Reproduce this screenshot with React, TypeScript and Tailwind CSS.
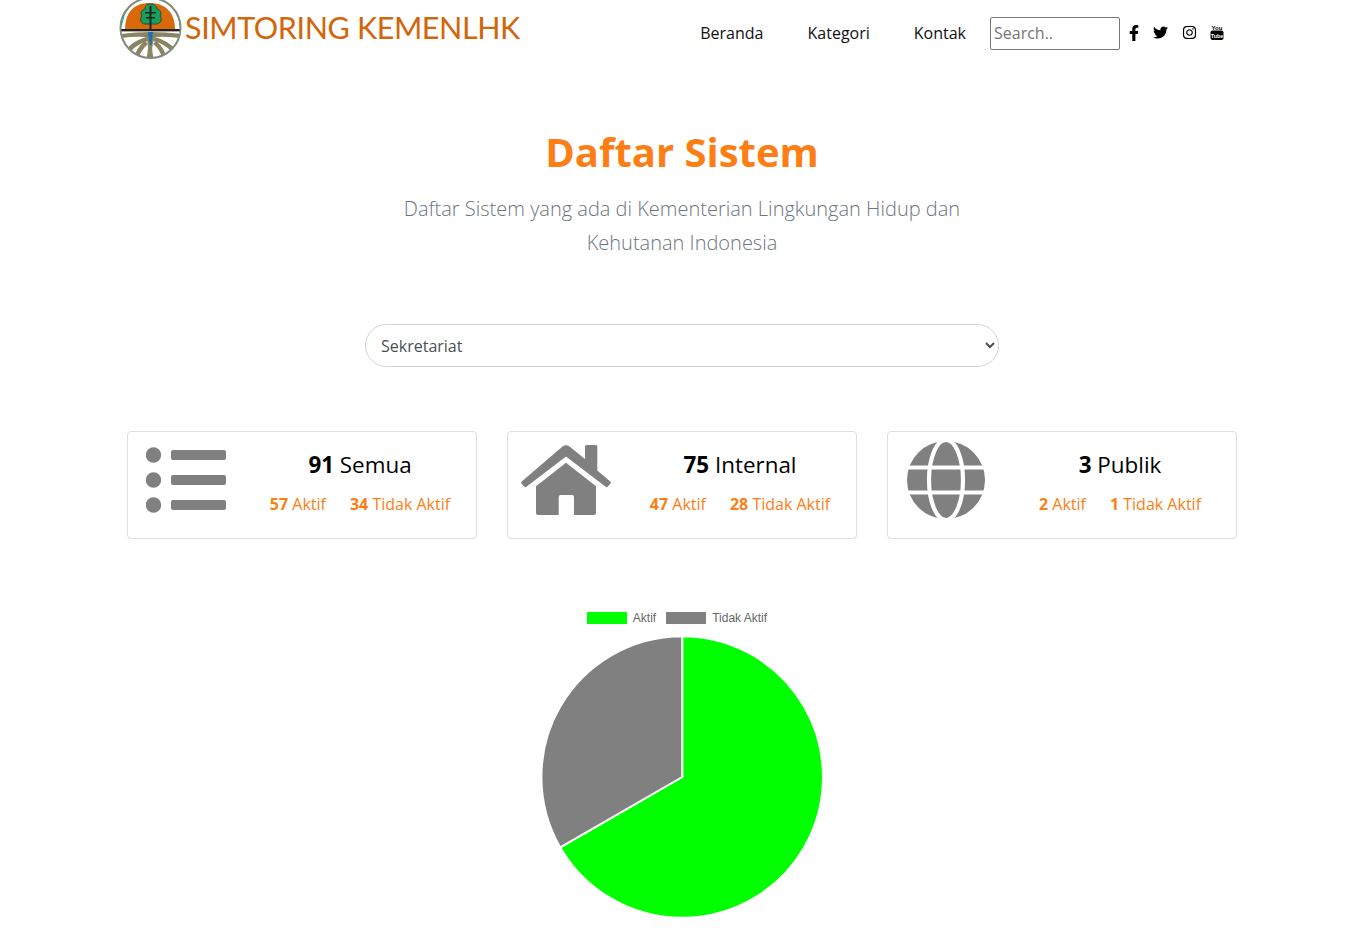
import React from "react";
import { FaFacebookF, FaTwitter, FaInstagram } from "react-icons/fa";

function Logo() {
  return (
    <svg width="64" height="60" viewBox="0 0 64 60" className="shrink-0">
      <defs>
        <clipPath id="lc"><circle cx="31.5" cy="28" r="29.5" /></clipPath>
      </defs>
      <circle cx="31.5" cy="28" r="30" fill="#fff" stroke="#8f8a70" strokeWidth="2" />
      <g clipPath="url(#lc)">
        <path d="M2 26 L5 15 M5 14 L10 7 M57 7 L62 26" stroke="#2aa37f" strokeWidth="1.4" fill="none" />
        <path d="M6 30 C6 11 16 3 30.5 3 C45 3 56 11 56 30Z" fill="#d9690b" />
        <rect x="0" y="29" width="64" height="2.6" fill="#23231f" />
        <rect x="0" y="31.6" width="64" height="3" fill="#fff" />
        <path d="M2 34 Q32 30 62 34 L62 38 Q44 36 36 37 Q31 46 35 60 L27 60 Q31 46 27 37 Q16 36 2 38Z" fill="#8a8460" />
        <path d="M27 37 Q12 42 7 50 L11 52 Q18 44 29 41Z M36 37 Q50 41 57 50 L53 52 Q46 44 34 41Z M26 41 Q17 48 15 58 L19 59 Q22 50 29 44Z M37 41 Q46 48 47 58 L43 59 Q42 50 34 44Z" fill="#8a8460" />
        <path d="M29 32 L34 32 L32.5 45 L31 45Z" fill="#1b6fb5" />
        <path d="M31.5 4 C27 4 26 7 26 9 C22 10 21 14 23 16 C20 19 22 25 28 24 L35 24 C41 25 44 20 41 16 C43 14 42 10 38 9 C38 7 36 4 31.5 4Z" fill="#14a05f" stroke="#0f4030" strokeWidth="0.8" />
        <path d="M30.5 6 H32.5 V31 H30.5Z M26 12 H37 V13.4 H26Z M27 17 H36 V18.4 H27Z" fill="#23231f" />
      </g>
      <circle cx="31.5" cy="28" r="29.8" fill="none" stroke="#5f8f9f" strokeWidth="0.6" />
    </svg>
  );
}

function YouTubeOld() {
  return (
    <svg width="14" height="16" viewBox="0 0 14 16" className="block">
      <text x="7" y="5.6" textAnchor="middle" fontSize="6" fontWeight="700" fontFamily="'Liberation Sans', sans-serif" fill="#000">You</text>
      <rect x="0.5" y="6.5" width="13" height="9.5" rx="2" fill="#000" />
      <text x="7" y="13.5" textAnchor="middle" fontSize="5.4" fontWeight="700" fontFamily="'Liberation Sans', sans-serif" fill="#fff">Tube</text>
    </svg>
  );
}

function ListIcon() {
  return (
    <svg width="80" height="70" viewBox="0 0 80 70" fill="#808080" className="block">
      <circle cx="7.5" cy="10" r="7.7" />
      <circle cx="7.5" cy="35" r="7.7" />
      <circle cx="7.5" cy="60" r="7.7" />
      <rect x="25" y="5" width="55" height="10" rx="2" />
      <rect x="25" y="30" width="55" height="10" rx="2" />
      <rect x="25" y="55" width="55" height="10" rx="2" />
    </svg>
  );
}

function HomeIcon() {
  return (
    <svg width="90" height="70" viewBox="0 0 90 70" fill="#808080" className="block">
      <path d="M41.5 1.5 Q45 -1 48.5 1.5 L64 14 V1.5 Q64 0 65.5 0 H75 Q76.3 0 76.3 1.5 V25.5 L89.3 36.5 Q90.3 37.5 89.5 38.5 L86.8 41.6 Q85.8 42.6 84.6 41.7 L45 11.5 L5.4 41.7 Q4.2 42.6 3.2 41.6 L0.5 38.5 Q-0.3 37.5 0.7 36.5 Z" />
      <path d="M45 17.7 L75 41.2 V68 Q75 70 73 70 H53 V52 Q53 50 51 50 H39.7 Q37.7 50 37.7 52 V70 H17 Q15 70 15 68 V41.2 Z" />
    </svg>
  );
}

function GlobeIcon() {
  return (
    <svg width="78" height="78" viewBox="0 0 78 78" className="block">
      <circle cx="39" cy="39" r="39" fill="#808080" />
      <ellipse cx="39" cy="39" rx="17" ry="40" fill="none" stroke="#fff" strokeWidth="4.2" />
      <path d="M0 26.5 H78 M0 51.5 H78" stroke="#fff" strokeWidth="4.2" />
    </svg>
  );
}

function Card({ icon, num, label, a, b, iconPt }: { icon: React.ReactNode; num: string; label: string; a: string; b: string; iconPt: string }) {
  return (
    <div className="w-[350px] h-[108px] border border-[#dfdfdf] rounded-[4px] bg-white grid grid-cols-[116px_232px]">
      <div className={"flex justify-center " + iconPt}>{icon}</div>
      <div className="flex flex-col items-center pt-[16px]">
        <div className="text-[22.4px] leading-[33px] text-black">
          <b className="font-bold">{num}</b> {label}
        </div>
        <div className="flex gap-6 mt-[11px] text-[16px] leading-[24px] text-[#fd7e14]">
          <span><b className="font-bold">{a}</b> Aktif</span>
          <span><b className="font-bold">{b}</b> Tidak Aktif</span>
        </div>
      </div>
    </div>
  );
}

export default function App() {
  return (
    <div className="bg-white text-black font-['Open_Sans',sans-serif] w-[1364px] h-[943px] overflow-hidden">
      <header className="w-[1140px] mx-auto h-[65px] flex items-start">
        <div className="ml-[7px] flex items-start">
          <Logo />
          <span className="ml-[2px] mt-[5px] text-[#d2660a] text-[30.5px] leading-[44px] font-['Lato',sans-serif] tracking-[-0.4px] whitespace-nowrap">
            SIMTORING KEMENLHK
          </span>
        </div>
        <nav className="ml-auto mr-[28px] flex items-center h-[33px] mt-[17px] text-[16px] text-[#111]">
          <a className="px-[22px] pb-[2px]">Beranda</a>
          <a className="px-[22px] pb-[2px]">Kategori</a>
          <a className="px-[22px] pb-[2px]">Kontak</a>
          <input
            placeholder="Search.."
            className="ml-[2px] w-[130px] h-[33px] px-[3px] pb-[2px] border border-[#767676] rounded-[2px] text-[16px] placeholder:text-[#757575] outline-none"
          />
          <div className="flex items-center text-black ml-[6px] w-[98px]">
            <FaFacebookF className="w-[14px] h-[16px] -mt-[2px] ml-[1px]" />
            <FaTwitter className="w-[15px] h-[15px] -mt-[2px] ml-[12px]" />
            <FaInstagram className="w-[15px] h-[15px] -mt-[2px] ml-[14px]" />
            <span className="ml-[13px] -mt-[3px]"><YouTubeOld /></span>
          </div>
        </nav>
      </header>

      <section className="flex flex-col items-center">
        <h2 className="mt-[57px] text-[40px] leading-[60px] font-bold text-[#fd7e14]">Daftar Sistem</h2>
        <p className="mt-[10px] w-[600px] text-center text-[20px] leading-[34px] font-light text-[#6c757d]">
          Daftar Sistem yang ada di Kementerian Lingkungan Hidup dan Kehutanan Indonesia
        </p>
        <select className="mt-[64px] w-[634px] h-[43px] pl-[11px] pr-[9px] border border-[#ced4da] rounded-full bg-white text-[16px] text-[#495057] outline-none">
          <option>Sekretariat</option>
        </select>
      </section>

      <section className="w-[1110px] mx-auto mt-[64px] flex gap-[30px]">
        <Card icon={<ListIcon />} iconPt="pt-[13px]" num="91" label="Semua" a="57" b="34" />
        <Card icon={<HomeIcon />} iconPt="pt-[13px]" num="75" label="Internal" a="47" b="28" />
        <Card icon={<GlobeIcon />} iconPt="pt-[9px]" num="3" label="Publik" a="2" b="1" />
      </section>

      <section className="mt-[72px] flex flex-col items-center">
        <div className="h-[14px] mr-[10px] flex items-center gap-[10px] text-[12px] leading-[14px] text-[#666] font-['Liberation_Sans',sans-serif]">
          <span className="flex items-center gap-[6px]"><i className="block w-[40px] h-[12px] bg-[#00ff00]" />Aktif</span>
          <span className="flex items-center gap-[6px]"><i className="block w-[40px] h-[12px] bg-[#808080]" />Tidak Aktif</span>
        </div>
        <svg width="284" height="284" viewBox="-142.2 -142 284 284" className="mt-[10px] block">
          <path d="M0 0 L0 -140.8 A140.8 140.8 0 1 1 -121.94 70.4 Z" fill="#00ff00" stroke="#fff" strokeWidth="2" />
          <path d="M0 0 L-121.94 70.4 A140.8 140.8 0 0 1 0 -140.8 Z" fill="#808080" stroke="#fff" strokeWidth="2" />
        </svg>
      </section>
    </div>
  );
}
